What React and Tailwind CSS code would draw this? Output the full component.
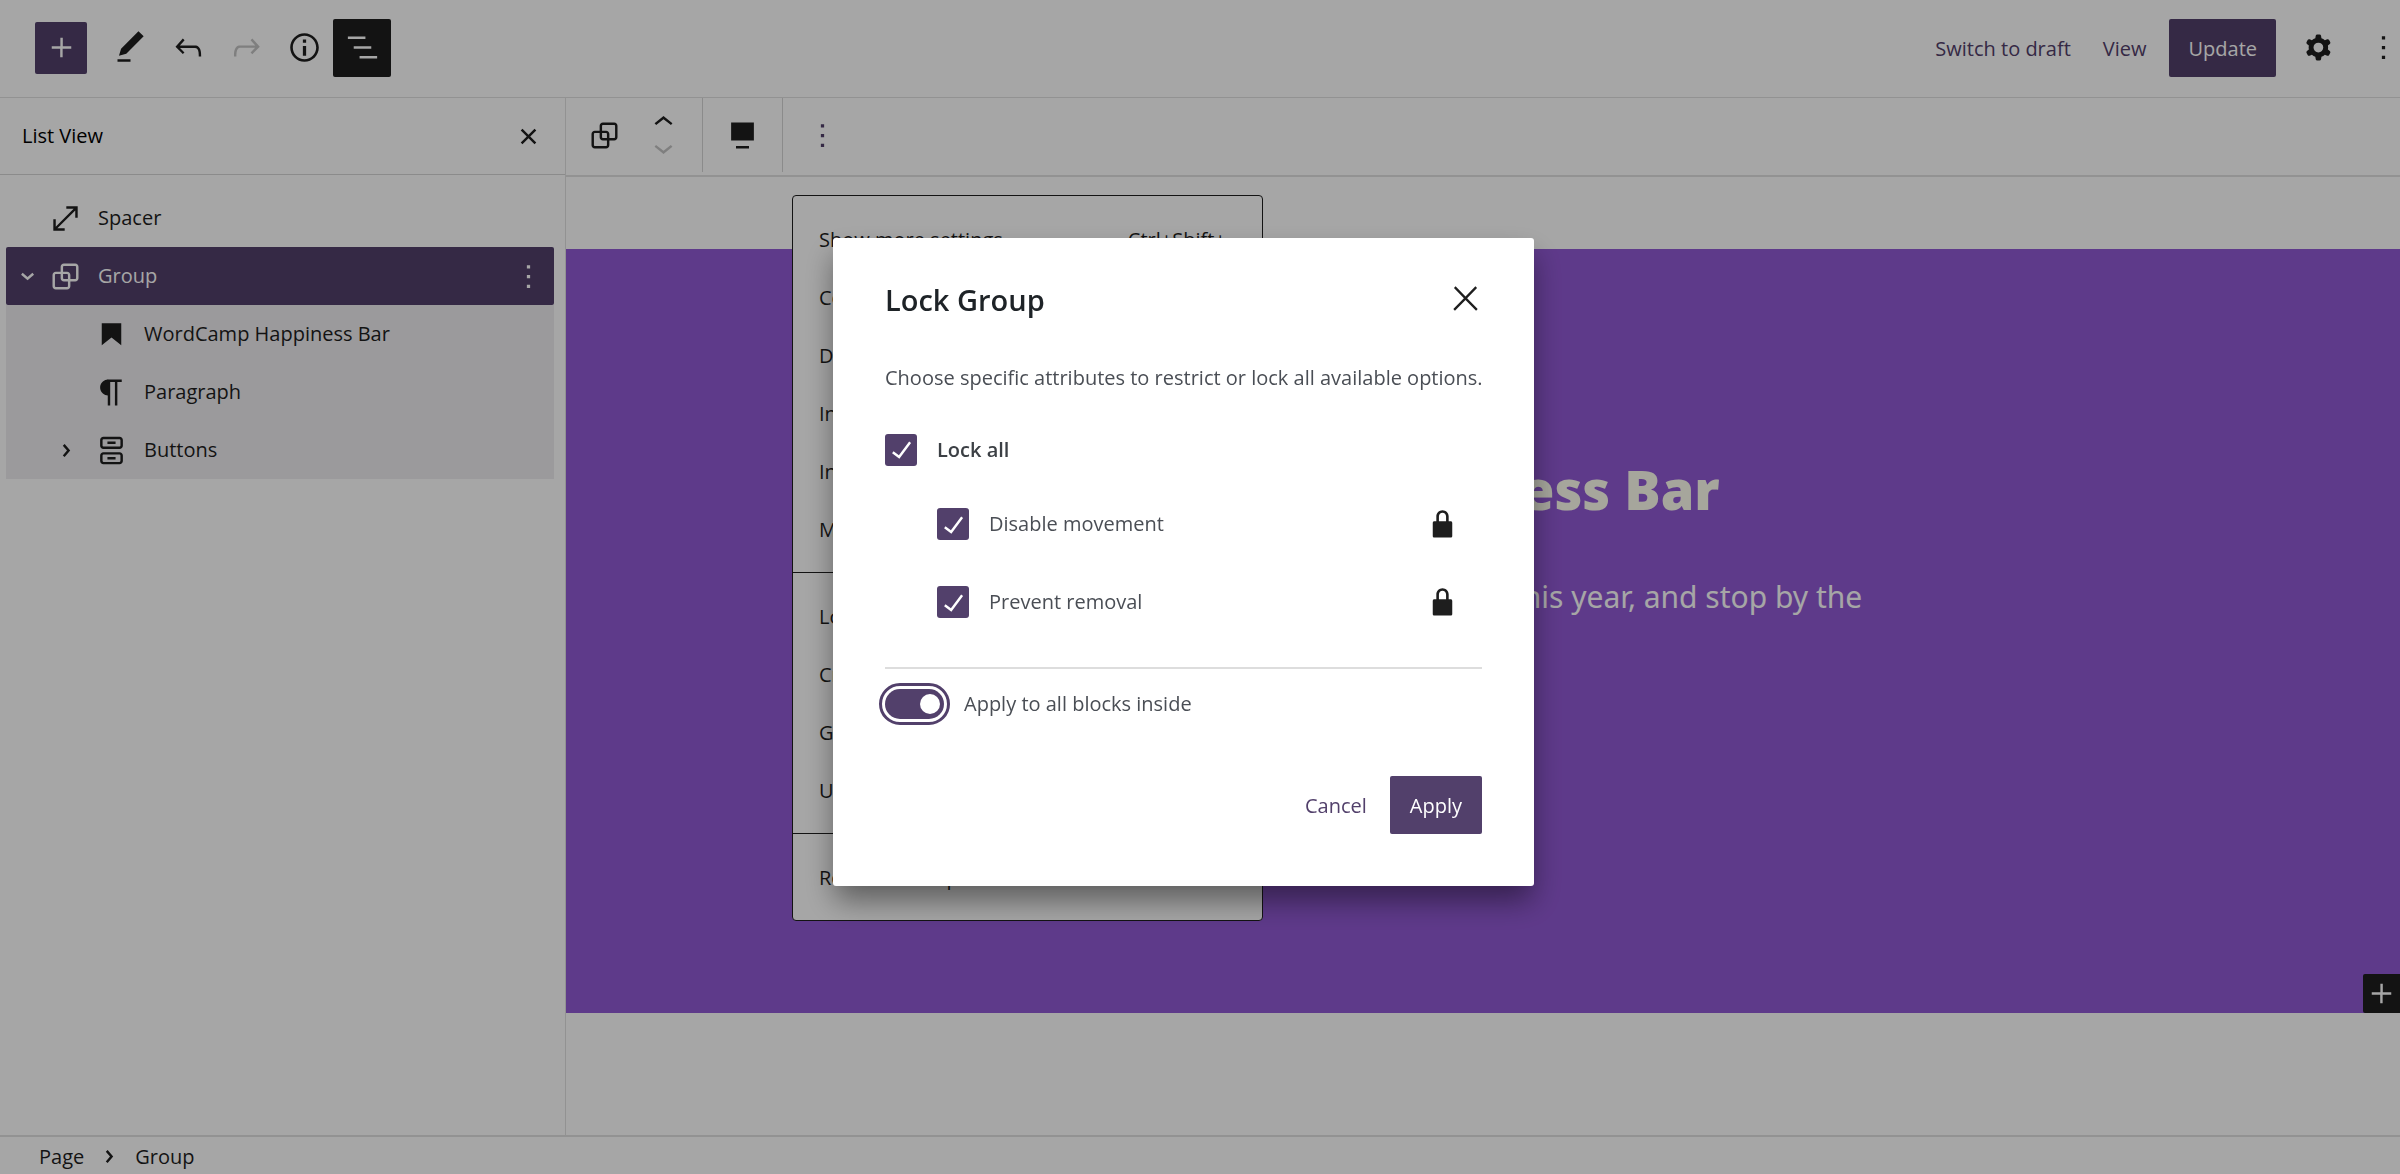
import React from "react";
import clsx from "clsx";

const PATHS = {
  plus: "M18 11.2h-5.2V6h-1.5v5.2H6v1.5h5.2V18h1.5v-5.2H18z",
  pencil: "M20.1 5.1L16.9 2 6.2 12.7l-1.3 4.4 4.5-1.3L20.1 5.1zM4 20.8h8v-1.5H4v1.5z",
  undo: "M18.3 11.7c-.6-.6-1.4-.9-2.3-.9H6.7l2.9-3.3-1.1-1-4.5 5L8.5 16l1-1-2.7-2.7H16c.5 0 .9.2 1.3.5 1 1 1 3.4 1 4.5v.3h1.5v-.2c0-1.5 0-4.3-1.5-5.7z",
  redo: "M15.6 6.5l-1.1 1 2.9 3.3H8c-.9 0-1.7.3-2.3.9-1.4 1.5-1.4 4.2-1.4 5.6v.2h1.5v-.3c0-1.1 0-3.5 1-4.5.3-.3.7-.5 1.3-.5h9.2L14.5 15l1.1 1.1 4.6-4.6-4.6-5z",
  info: "M12 3.2c-4.8 0-8.8 3.9-8.8 8.8 0 4.8 3.9 8.8 8.8 8.8 4.8 0 8.8-3.9 8.8-8.8 0-4.8-4-8.8-8.8-8.8zm0 16c-4 0-7.2-3.3-7.2-7.2C4.8 8 8 4.8 12 4.8s7.2 3.3 7.2 7.2c0 4-3.2 7.2-7.2 7.2zM11 17h2v-6h-2v6zm0-8h2V7h-2v2z",
  listView: "M13.8 5.2H3v1.5h10.8V5.2zm-3.6 12v1.5H21v-1.5H10.2zm7.2-6H6.6v1.5h10.8v-1.5z",
  more: "M13 19h-2v-2h2v2zm0-6h-2v-2h2v2zm0-6h-2V5h2v2z",
  closeSmall: "M12 13.06l3.712 3.713 1.061-1.06L13.061 12l3.712-3.712-1.06-1.06L12 10.938 8.288 7.227l-1.061 1.06L10.939 12l-3.712 3.712 1.06 1.061L12 13.061z",
  close: "M13 11.8l6.1-6.3-1-1-6.1 6.2-6.1-6.2-1 1 6.1 6.3-6.5 6.7 1 1 6.5-6.6 6.5 6.6 1-1z",
  chevronRight: "M10.862 8.04l3.419 3.989-3.419 3.988-1.139-.976 2.582-3.012-2.582-3.012 1.139-.977z",
  chevronDownSmall: "M8.04 10.862l3.989 3.419 3.988-3.419-.976-1.139-3.012 2.582-3.012-2.582-.977 1.139z",
  chevronUp: "M6.5 12.4L12 8l5.5 4.4-.9 1.2L12 10l-4.5 3.6-1-1.2z",
  chevronDown: "M17.5 11.6L12 16l-5.5-4.4.9-1.2L12 14l4.5-3.6 1 1.2z",
  spacer: "M7 18h4.5v1.5h-7v-7H6V17L17 6h-4.5V4.5h7v7H18V7L7 18Z",
  group: "M18 4h-7c-1.1 0-2 .9-2 2v3H6c-1.1 0-2 .9-2 2v7c0 1.1.9 2 2 2h7c1.1 0 2-.9 2-2v-3h3c1.1 0 2-.9 2-2V6c0-1.1-.9-2-2-2zm-4.5 14c0 .3-.2.5-.5.5H6c-.3 0-.5-.2-.5-.5v-7c0-.3.2-.5.5-.5h3V13c0 1.1.9 2 2 2h2.5v3zm0-4.5H11c-.3 0-.5-.2-.5-.5v-2.5H13c.3 0 .5.2.5.5v2.5zm5-.5c0 .3-.2.5-.5.5h-3V11c0-1.1-.9-2-2-2h-2.5V6c0-.3.2-.5.5-.5h7c.3 0 .5.2.5.5v7z",
  heading: "M6 5v13.6l6-4.75 6 4.75V5H6z",
  paragraph: "M18.3 4H9.9v-.1l-.9.2c-2.3.4-4 2.4-4 4.8s1.7 4.4 4 4.8l.7.1V20h1.5V5.5h2.9V20h1.5V5.5h2.7V4z",
  buttons: "M14.5 17.5h-5V16h5v1.5zM14.5 8h-5V6.5h5V8zM7 3.5h10c1.1 0 2 .9 2 2V9c0 1.1-.9 2-2 2H7c-1.1 0-2-.9-2-2V5.5c0-1.1.9-2 2-2zM17 5H7c-.28 0-.5.22-.5.5V9c0 .28.22.5.5.5h10c.28 0 .5-.22.5-.5V5.5c0-.28-.22-.5-.5-.5zM7 13h10c1.1 0 2 .9 2 2v3.5c0 1.1-.9 2-2 2H7c-1.1 0-2-.9-2-2V15c0-1.1.9-2 2-2zM17 14.5H7c-.28 0-.5.22-.5.5v3.5c0 .28.22.5.5.5h10c.28 0 .5-.22.5-.5V15c0-.28-.22-.5-.5-.5z",
  align: "M5 4h14v11H5V4zm3 16h8v-1.5H8V20z",
  cog: "M10.289 4.836A1 1 0 0111.275 4h1.306a1 1 0 01.987.836l.244 1.466c.787.26 1.503.679 2.108 1.218l1.393-.522a1 1 0 011.216.437l.653 1.13a1 1 0 01-.23 1.273l-1.148.944a6.025 6.025 0 010 2.435l1.149.946a1 1 0 01.23 1.272l-.653 1.13a1 1 0 01-1.216.437l-1.394-.522c-.605.54-1.32.958-2.108 1.218l-.244 1.466a1 1 0 01-.987.836h-1.306a1 1 0 01-.986-.836l-.244-1.466a5.995 5.995 0 01-2.108-1.218l-1.394.522a1 1 0 01-1.217-.436l-.653-1.131a1 1 0 01.23-1.272l1.149-.946a6.026 6.026 0 010-2.435l-1.148-.944a1 1 0 01-.23-1.272l.653-1.131a1 1 0 011.217-.437l1.393.522a5.994 5.994 0 012.108-1.218l.244-1.466zM14.929 12a3 3 0 11-6 0 3 3 0 016 0z",
  lock: "M17 10h-1.2V7c0-2.1-1.7-3.8-3.8-3.8-2.1 0-3.8 1.7-3.8 3.8v3H7c-.6 0-1 .4-1 1v8c0 .6.4 1 1 1h10c.6 0 1-.4 1-1v-8c0-.6-.4-1-1-1zm-2.8 0H9.8V7c0-1.2 1-2.2 2.2-2.2s2.2 1 2.2 2.2v3z",
  check: "M16.7 7.1l-6.3 8.5-3.3-2.5-.9 1.2 4.5 3.4L17.9 8z",
};

function Icon({ name, className }) {
  return (
    <svg viewBox="0 0 24 24" fill="currentColor" fillRule="evenodd" aria-hidden="true" className={clsx("size-[39px] shrink-0", className)}>
      <path d={PATHS[name]} />
    </svg>
  );
}

function IconButton({ icon, label, className, disabled }) {
  return (
    <button type="button" aria-label={label} disabled={disabled} className={clsx("flex size-[58px] shrink-0 items-center justify-center rounded-xs", className)}>
      <Icon name={icon} />
    </button>
  );
}

function Header() {
  return (
    <header className="flex h-[98px] shrink-0 items-center justify-between border-b border-[#e0e0e0] pb-[2px] pl-[35px]">
      <div className="flex items-center">
        <button type="button" aria-label="Toggle block inserter" className="mr-[14px] flex size-[52px] items-center justify-center rounded-xs bg-[#52406b] text-white">
          <Icon name="plus" />
        </button>
        <IconButton icon="pencil" label="Tools" />
        <IconButton icon="undo" label="Undo" />
        <IconButton icon="redo" label="Redo" disabled className="text-[#c4c4c4]" />
        <IconButton icon="info" label="Details" />
        <IconButton icon="listView" label="List View" className="bg-[#1e1e1e] text-white" />
      </div>
      <div className="-mr-3 flex items-center text-[#52406b]">
        <button type="button" className="h-[58px] px-4 pt-[2px]">Switch to draft</button>
        <a href="#view" className="px-4 pt-[2px]">View</a>
        <button type="button" className="mx-[7px] h-[58px] rounded-xs bg-[#52406b] px-[19px] pt-[2px] text-white">Update</button>
        <IconButton icon="cog" label="Settings" className="ml-[6px] text-[#1e1e1e]" />
        <IconButton icon="more" label="Options" className="ml-[7px] text-[#1e1e1e]" />
      </div>
    </header>
  );
}

function ListRow({ icon, label, toggle, nested, selected }) {
  return (
    <li className={clsx("flex h-[58px] items-center", nested ? "pl-[41px]" : "pl-[2px]", selected && "rounded-xs bg-[#52406b] text-white")}>
      <span className={clsx("flex w-[38px] shrink-0 justify-center", nested && "mr-[7px]")}>{toggle && <Icon name={toggle} />}</span>
      <a href={"#" + icon} className="flex flex-1 items-center gap-[13px]">
        <Icon name={icon} />
        {label}
      </a>
      {selected && (
        <button type="button" aria-label="Group options" className="mr-[6px]">
          <Icon name="more" />
        </button>
      )}
    </li>
  );
}

function Sidebar() {
  return (
    <aside className="w-[566px] shrink-0 border-r border-[#e0e0e0]">
      <div className="flex h-[77px] items-center justify-between border-b border-[#d6d6d6] pr-[17px] pl-[22px]">
        <h2 className="font-medium text-black">List View</h2>
        <button type="button" aria-label="Close List View">
          <Icon name="closeSmall" />
        </button>
      </div>
      <ul className="pt-[14px] pr-[11px] pl-[6px]">
        <ListRow icon="spacer" label="Spacer" />
        <ListRow icon="group" label="Group" toggle="chevronDownSmall" selected />
        <li>
          <ul className="bg-[#eeedf0]">
            <ListRow icon="heading" label="WordCamp Happiness Bar" nested />
            <ListRow icon="paragraph" label="Paragraph" nested />
            <ListRow icon="buttons" label="Buttons" toggle="chevronRight" nested />
          </ul>
        </li>
      </ul>
    </aside>
  );
}

const MENU = [
  [["Show more settings", "Ctrl+Shift+,"], ["Copy"], ["Duplicate", "Ctrl+Shift+D"], ["Insert before", "Ctrl+Alt+T"], ["Insert after", "Ctrl+Alt+Y"], ["Move to"]],
  [["Lock"], ["Create Reusable block"], ["Group"], ["Ungroup"]],
  [["Remove Group", "Shift+Alt+Z"]],
];

function BlockMenu() {
  return (
    <div role="menu" className="absolute top-full left-[9px] z-10 mt-[23px] w-[471px] divide-y divide-[#1e1e1e] rounded-[4px] border border-[#1e1e1e] bg-white">
      {MENU.map((group) => (
        <div key={group[0][0]} role="group" className="px-[13px] py-[14px]">
          {group.map(([label, keys]) => (
            <button key={label} type="button" role="menuitem" className="flex h-[58px] w-full items-center justify-between pt-[2px] pr-[18px] pl-[13px]">
              <span>{label}</span>
              <span>{keys}</span>
            </button>
          ))}
        </div>
      ))}
    </div>
  );
}

function BlockToolbar() {
  return (
    <div className="flex h-[79px] border-b-2 border-[#e0e0e0] pb-[3px]">
      <div className="flex w-[137px] items-center border-r border-[#d6d6d6] pl-[19px]">
        <button type="button" aria-label="Group">
          <Icon name="group" />
        </button>
        <div className="ml-[20px] flex flex-col">
          <button type="button" aria-label="Move up" className="flex h-[29px] items-center">
            <Icon name="chevronUp" className="mt-[4px]" />
          </button>
          <button type="button" aria-label="Move down" disabled className="flex h-[29px] items-center text-[#c4c4c4]">
            <Icon name="chevronDown" className="mb-[4px]" />
          </button>
        </div>
      </div>
      <div className="flex w-[80px] items-center justify-center border-r border-[#d6d6d6]">
        <button type="button" aria-label="Align">
          <Icon name="align" />
        </button>
      </div>
      <div className="relative flex w-[78px] items-center justify-center">
        <button type="button" aria-label="Options" className="text-[#52406b]">
          <Icon name="more" />
        </button>
        <BlockMenu />
      </div>
    </div>
  );
}

function Canvas() {
  return (
    <main className="flex min-w-0 flex-1 flex-col">
      <BlockToolbar />
      <div className="h-[72px]" />
      <section className="relative flex h-[764px] flex-col items-center bg-[#9159d4] pt-[200px]">
        <div className="w-full max-w-[960px]">
          <h1 className="font-[Noto_Sans] text-[54px] leading-[80px] font-black text-[#fffff0]">WordCamp Happiness Bar</h1>
          <p className="mt-[38px] font-[Noto_Sans] text-[30px] leading-[60px] text-white">
            Please join us at WordCamp Europe this year, and stop by the Happiness Bar
          </p>
        </div>
        <button type="button" aria-label="Add block" className="absolute right-0 bottom-0 flex h-[39px] w-[37px] items-center justify-center rounded-l-xs bg-[#1e1e1e] text-white">
          <Icon name="plus" />
        </button>
      </section>
    </main>
  );
}

function Checkbox({ id, label, className, labelClass, locked }) {
  return (
    <div className={clsx("flex items-center gap-[20px]", className)}>
      <span className="grid grid-cols-[32px] grid-rows-[32px] place-items-center">
        <input id={id} type="checkbox" defaultChecked className="col-start-1 row-start-1 size-[32px] appearance-none rounded-[3px] bg-[#52406b]" />
        <Icon name="check" className="pointer-events-none col-start-1 row-start-1 text-white" />
      </span>
      <label htmlFor={id} className={clsx("flex-1", labelClass)}>{label}</label>
      {locked && <Icon name="lock" className="text-[#1e1e1e]" />}
    </div>
  );
}

function LockModal() {
  return (
    <div className="fixed inset-0 z-20 flex items-center justify-center bg-black/35 pr-[33px] pb-[51px]">
      <div
        role="dialog"
        aria-modal="true"
        aria-labelledby="lock-title"
        className="w-[701px] rounded-[3px] bg-white px-[52px] pt-[32px] pb-[52px] text-[#4a4e55] shadow-[0_16px_30px_-2px_rgba(0,0,0,0.45)]"
      >
        <div className="flex h-[58px] items-center justify-between">
          <h2 id="lock-title" className="pt-[3px] text-[29px] leading-[40px] font-semibold text-[#1e2327]">Lock Group</h2>
          <button type="button" aria-label="Close" className="-mr-[3px] text-[#1e1e1e]">
            <Icon name="close" />
          </button>
        </div>
        <p className="mt-[34px] leading-[32px] whitespace-nowrap">Choose specific attributes to restrict or lock all available options.</p>
        <Checkbox id="lock-all" label="Lock all" className="mt-[40px] h-[32px]" labelClass="font-semibold text-[#3c4045]" />
        <Checkbox id="lock-move" label="Disable movement" className="mt-[39px] h-[39px] pr-[20px] pl-[52px]" locked />
        <Checkbox id="lock-remove" label="Prevent removal" className="mt-[39px] h-[39px] pr-[20px] pl-[52px]" locked />
        <div className="mt-[45px] flex items-center gap-[20px] border-t-2 border-[#dddddd] pt-[20px]">
          <span className="grid h-[30px] w-[59px] items-center">
            <input
              id="apply-inside"
              type="checkbox"
              role="switch"
              defaultChecked
              className="col-start-1 row-start-1 h-[30px] w-[59px] appearance-none rounded-full bg-[#52406b] outline-3 outline-offset-3 outline-[#52406b]"
            />
            <span className="pointer-events-none col-start-1 row-start-1 mr-[4px] size-[20px] justify-self-end rounded-full bg-white" />
          </span>
          <label htmlFor="apply-inside">Apply to all blocks inside</label>
        </div>
        <div className="mt-[57px] flex justify-end">
          <button type="button" className="h-[58px] px-[19px] pt-[2px] text-[#52406b]">Cancel</button>
          <button type="button" className="ml-1 h-[58px] rounded-xs bg-[#52406b] px-5 pt-[2px] font-medium text-white">Apply</button>
        </div>
      </div>
    </div>
  );
}

export default function App() {
  return (
    <div className="flex min-h-screen flex-col bg-white font-['Open_Sans',sans-serif] text-[20px] leading-[30px] text-[#1e1e1e]">
      <Header />
      <div className="flex flex-1">
        <Sidebar />
        <Canvas />
      </div>
      <nav aria-label="Block breadcrumb" className="flex h-[39px] shrink-0 items-center border-t-2 border-[#e0e0e0] pt-[2px] pl-[39px]">
        <a href="#page">Page</a>
        <Icon name="chevronRight" className="mx-[6px]" />
        <span>Group</span>
      </nav>
      <LockModal />
    </div>
  );
}
